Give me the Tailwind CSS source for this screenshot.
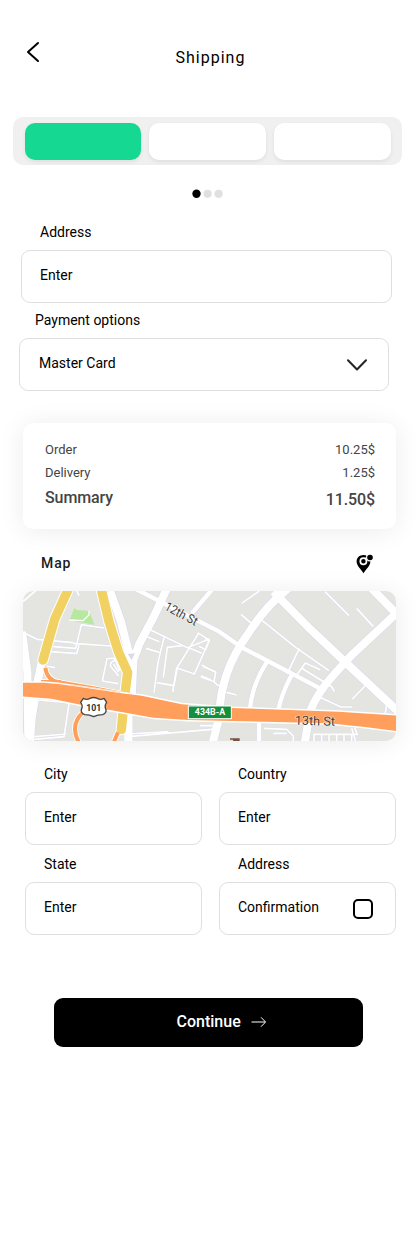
<!DOCTYPE html>
<html lang="en">
<head>
<meta charset="utf-8">
<meta name="viewport" content="width=device-width">
<title>Shipping</title>
<script src="https://cdn.jsdelivr.net/npm/@tailwindcss/browser@4"></script>
</head>
<body class="bg-white">
<main class="flex h-[1260px] w-[417px] flex-col overflow-hidden bg-white font-['Roboto',sans-serif] text-[14px] leading-4 text-black">
  <header class="flex h-[117px] shrink-0 items-start pl-[26px] pt-[41px]">
    <button aria-label="Back"><svg class="block" width="14" height="22" viewBox="0 0 14 22" fill="none" stroke="#000" stroke-width="2" stroke-linecap="round" stroke-linejoin="round"><path d="M12 2 2 11l10 9"/></svg></button>
    <h1 class="ml-[135.5px] mt-[8px] text-[16px] leading-[18px] tracking-[1px]">Shipping</h1>
  </header>
  <nav class="ml-[13px] flex h-12 w-[389px] shrink-0 rounded-[10px] bg-[#f0f0f0] pl-3 pt-1.5">
    <div class="h-[37px] w-[116px] rounded-[10px] bg-[#15d993] shadow-[0_2px_4px_rgba(0,0,0,0.07)]"></div>
    <div class="ml-2 h-[37px] w-[116.5px] rounded-[10px] bg-white shadow-[0_2px_4px_rgba(0,0,0,0.07)]"></div>
    <div class="ml-[8.5px] h-[37px] w-[117px] rounded-[10px] bg-white shadow-[0_2px_4px_rgba(0,0,0,0.07)]"></div>
  </nav>
  <div class="ml-[192px] mt-6 h-[35px] shrink-0">
    <svg class="block" width="32" height="10" viewBox="0 0 32 10"><circle cx="4.5" cy="4.8" r="4.2"/><circle cx="15.6" cy="4.8" r="4.1" fill="#e0e0e0"/><circle cx="26.6" cy="4.8" r="4.1" fill="#e0e0e0"/></svg>
  </div>
  <label class="ml-10 h-[26px] shrink-0">Address</label>
  <div class="ml-[21px] h-[53px] w-[371px] shrink-0 rounded-[9px] border border-[#dfdfdf] pl-[18px] pt-4">Enter</div>
  <label class="ml-[35px] mt-[9px] h-[26px] shrink-0">Payment options</label>
  <div class="ml-[19px] flex h-[53px] w-[370px] shrink-0 justify-between rounded-[9px] border border-[#dfdfdf] pl-[19px] pr-[20px] pt-4">
    <span>Master Card</span>
    <svg class="mt-[3px]" width="22" height="14" viewBox="0 0 22 14" fill="none" stroke="#242424" stroke-width="2" stroke-linecap="round" stroke-linejoin="round"><path d="m2 2.2 9 9.3 9-9.3"/></svg>
  </div>
  <section class="ml-[23px] mt-8 flex h-[106px] w-[373px] shrink-0 flex-col rounded-[10px] bg-white pl-[22px] pr-[21px] pt-[18.5px] text-[13px] text-[#444446] shadow-[0_2px_26px_rgba(0,0,0,0.08)]">
    <div class="flex h-[23px] justify-between"><span>Order</span><span>10.25$</span></div>
    <div class="flex h-[24px] justify-between"><span>Delivery</span><span>1.25$</span></div>
    <div class="flex justify-between text-[16px] font-medium leading-[18px] tracking-[-0.1px]"><span>Summary</span><span class="pt-[2px]">11.50$</span></div>
  </section>
  <div class="ml-[41px] mt-[25px] flex h-[37px] w-[333px] shrink-0 justify-between">
    <h2 class="pt-px font-medium tracking-[0.9px] text-[#1c1c1c]">Map</h2>
    <svg width="18" height="20" viewBox="0 0 18 20"><path d="M7.5 1C3.5 1 .6 3.8.6 7.5c0 4.4 4.3 7.4 6.9 11.7 2.6-4.3 6.9-7.3 6.9-11.7 0-.3 0-.7-.1-1Q11 6 11 2q-1.6-1-3.5-1Z"/><circle cx="7.4" cy="7.2" r="3.1" fill="none" stroke="#fff" stroke-width="1.7"/><path d="m9 5 3-3" stroke="#fff" stroke-width="1.2"/><circle cx="14" cy="3.5" r="3.9" fill="#fcfcfc"/><circle cx="14" cy="3.5" r="2.8"/></svg>
  </div>
  <div class="ml-[23px] h-[150px] w-[373px] shrink-0 overflow-hidden rounded-[10px] shadow-[0_2px_26px_rgba(0,0,0,0.08)]">
    <svg class="block" width="373" height="150" viewBox="24 18 1119 450" fill="none">
      <rect x="24" y="18" width="1119" height="450" fill="#e4e4e1"/>
      <defs>
        <g id="lanes">
          <path d="M24 142 67 163 175 173M175 175 330 186M185 18 192 32M115 185l67 5 17-71 68 10M108 200l77 6 7-25M95 243l25 5M330 180l10-12"/>
          <path d="m262 288 14-67 22-2M262 288l48 8M298 219l16 38M300 225q-14 6-14 18l25 30M295 236l15 25M407 135l110 53 67-26M397 155l36 15M393 190l40 12M447 157l-18 75-12 91M445 278l12-91 45-5M425 293l52 9 10-55 65-104M488 250l50 17 45-102-35-22M525 190l35 15M473 321l12-73M558 272l30 13M565 245l37 15"/>
          <path d="M163 350 147 455 58 463M58 455l96-8M70 345l97 9M340 455l250-22 20-20M340 447l120-7"/>
          <path d="m733 18-53 37M678 88l30 26M742 107l100 80 100 70M853 190l-36 75M847 268l24-34 45 20M860 250l90 55 8 15M635 322l30 8M912 335l65 31h35M930 20l72 72M1025 70l50 55M1010 250l48 45-46 47M1033 260l25 36M1115 360l-5 28M560 240l42 22-5 28-40-15M597 290l10 10 30 8M570 160l12 8-10 26-20-10"/>
          <path d="M747 430l68 3 20 20v18M775 445h40M897 470v-22h130l-8-20M920 450v20M942 450v20M965 450v20M987 450v20M1010 450v20M555 422h40M1010 430l12 40"/>
        </g>
        <g id="streets">
          <path d="M358 10 610 138 680 187 915 310M755 232q-42 65-50 138M830 270q-30 55-40 105M732 410v60M530 85 590 15"/>
        </g>
        <g id="avenues">
          <path d="M455 12 418 92 373 177 355 225 350 340M21 140 37 260 40 470M80 230 68 290 50 400 45 470M285 18l33 92 20 80 12 40M820 10Q755 60 700 145 615 260 612 400L594 470M775 20 885 132 1000 240 1155 385M1155 75 1010 210 960 265Q905 325 885 380L870 470M1070 10l80 82"/>
        </g>
      </defs>
      <g stroke="#d9dbea">
        <use href="#lanes" stroke-width="7"/>
        <use href="#streets" stroke-width="16"/>
        <use href="#avenues" stroke-width="28"/>
      </g>
      <g stroke="#fff">
        <use href="#lanes" stroke-width="5"/>
        <use href="#streets" stroke-width="13"/>
        <use href="#avenues" stroke-width="24"/>
      </g>
      <path d="M62 17 24 50" stroke="#fff" stroke-width="5"/>
      <path d="m338 207 12 18 10-20Z" fill="#dadbe8"/>
      <path d="m178 69 7 6 38 3 15 41-75-13Z" fill="#b7e8a0"/><path d="m163 105 41 2 18-17v-13" stroke="#fff" stroke-width="4"/>
      <path d="M340 355v115" stroke="#fff" stroke-width="24"/>
      <path d="M162 8 120 100 84 225M258 10 282 110 310 200 338 262 330 325 319 434" stroke="#fff" stroke-width="34" stroke-linecap="round" stroke-linejoin="round"/>
      <path d="M162 8 120 100 84 225M258 10 282 110 310 200 338 262 330 325 319 434" stroke="#f0d162" stroke-width="28" stroke-linecap="round" stroke-linejoin="round"/>
      <path d="M91 249q5 36 40 43l100 17 90 17M78 291h60M206 380q-43 38-15 92M309 442l-12 28" stroke="#fff" stroke-width="17"/>
      <path d="M91 249q5 36 40 43l100 17 90 17M78 291h60M206 380q-43 38-15 92M309 442l-12 28" stroke="#ff9f5b" stroke-width="12"/>
      <path d="M20 293 85 293 130 297 200 307 320 325 380 332 500 358 650 369 970 380 1145 392V438L1050 426 940 415 650 408 520 405 415 398 340 385 200 360 110 341 20 334Z" fill="#ff9f5b" stroke="#fff" stroke-width="9" paint-order="stroke"/>
      <path d="m165 299 70 10 80 14" stroke="#ffd0a8" stroke-width="2"/>
      <path d="M205 340q10 6 20 0 11-5 22 0 10 6 20 0l8 12q-8 10-2 22 2 10-10 15-15 0-27 6-12-6-27-6-12-5-10-15 6-12-2-22Z" fill="#fff" stroke="#454545" stroke-width="4" stroke-linejoin="round"/>
      <text x="236" y="378" text-anchor="middle" font-family="Roboto" font-weight="700" font-size="29" textLength="45" lengthAdjust="spacingAndGlyphs" fill="#303030">101</text>
      <rect x="520" y="363" width="129" height="38" fill="#138f3d" stroke="#fff" stroke-width="3"/>
      <text x="585" y="391" text-anchor="middle" font-family="Roboto" font-weight="700" font-size="26" textLength="91" lengthAdjust="spacingAndGlyphs" fill="#fff">434B-A</text>
      <g fill="#404040" stroke="#fff" stroke-opacity=".55" stroke-width="4" paint-order="stroke" stroke-linejoin="round" font-family="Roboto" font-size="38">
        <text x="446" y="73" transform="rotate(28 446 73)" textLength="106" lengthAdjust="spacingAndGlyphs">12th St</text>
        <text x="839" y="419" transform="rotate(1.5 839 419)" textLength="121" lengthAdjust="spacingAndGlyphs">13th St</text>
      </g>
      <path d="M645 460h29v8h-20v-4h-9Z" fill="#775242"/>
    </svg>
  </div>
  <div class="ml-[25px] mt-[25px] grid shrink-0 grid-cols-[177px_177px] gap-x-[17px]">
    <label class="h-[26px] pl-[19px]">City</label><label class="h-[26px] pl-[19px]">Country</label>
    <div class="h-[53px] rounded-[9px] border border-[#dfdfdf] pl-[18px] pt-4">Enter</div>
    <div class="h-[53px] rounded-[9px] border border-[#dfdfdf] pl-[18px] pt-4">Enter</div>
    <label class="mt-[11px] h-[26px] pl-[19px]">State</label><label class="mt-[11px] h-[26px] pl-[19px]">Address</label>
    <div class="h-[53px] rounded-[9px] border border-[#dfdfdf] pl-[18px] pt-4">Enter</div>
    <div class="flex h-[53px] justify-between rounded-[9px] border border-[#dfdfdf] pl-[18px] pr-[22px] pt-4"><span>Confirmation</span><span class="size-5 rounded-[5px] border-2 border-black"></span></div>
  </div>
  <button class="ml-[54px] mt-[63px] flex h-[49px] w-[309px] shrink-0 items-center rounded-[9px] bg-black pb-0.5 pl-[122.5px] text-[16px] font-medium text-white">
    <span>Continue</span>
    <svg class="ml-2.5 mt-px" width="16" height="12" viewBox="0 0 16 12" fill="none" stroke="#fff" stroke-width="1"><path d="M.5 6H14M10 1.3 14.6 6 10 10.7"/></svg>
  </button>
</main>
</body>
</html>
